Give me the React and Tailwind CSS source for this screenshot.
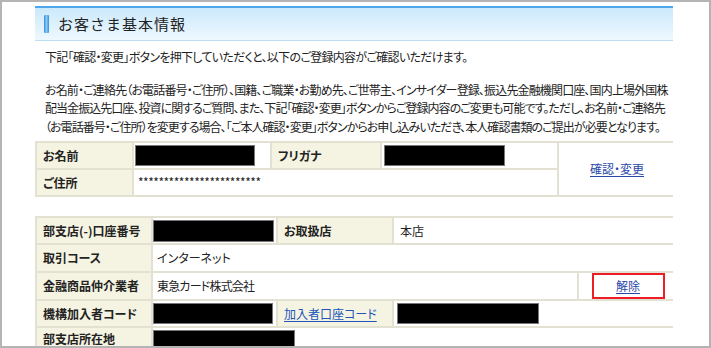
import React from "react";

const JP = "font-['Noto_Sans_CJK_JP','Noto_Sans',sans-serif]";

function Black({ w, h = "h-[21px]" }) {
  return <div className={`${w} ${h} bg-black border border-[#777]`} />;
}

function Label({ children, className = "" }) {
  return (
    <div className={`bg-[#f5f3e1] flex pl-[6px] font-bold text-[12px] text-[#222] ${className || "items-center"}`}>
      {children}
    </div>
  );
}

function Cell({ children, className = "" }) {
  return <div className={`bg-white flex items-center text-[12px] text-[#222] ${className}`}>{children}</div>;
}

export default function App() {
  return (
    <div className={`w-[711px] h-[348px] overflow-hidden bg-white border-2 border-[#b4b4b4] ${JP} [font-feature-settings:'palt']`}>
      <div className="pl-[33px] pt-[4px] w-[671px]">
        {/* header */}
        <div className="h-[35px] border-t-2 border-[#4fa6e8] border-b border-b-[#bcdff3] bg-gradient-to-b from-[#cbe9fb] to-[#eef8fe] flex items-center">
          <div className="ml-[9px] w-[5px] h-[18px] rounded-[1px] bg-gradient-to-r from-[#2f8fdc] via-[#8cc8f2] to-[#2f8fdc]" />
          <div className="ml-[9px] text-[15px] tracking-[1px] text-[#222] [font-feature-settings:normal]">お客さま基本情報</div>
        </div>

        {/* text */}
        <div className="pl-[10px] text-[12px] leading-[18.5px] tracking-[-0.7px] text-[#222] whitespace-nowrap">
          <p className="mt-[7px]">下記「確認・変更」ボタンを押下していただくと、以下のご登録内容がご確認いただけます。</p>
          <p className="mt-[14px]">
            <span className="block tracking-[-0.85px]">お名前・ご連絡先（お電話番号・ご住所）、国籍、ご職業・お勤め先、ご世帯主、インサイダー登録、振込先金融機関口座、国内上場外国株</span>
            <span className="block tracking-[-0.95px]">配当金振込先口座、投資に関するご質問、また、下記「確認・変更」ボタンからご登録内容のご変更も可能です。ただし、お名前・ご連絡先</span>
            <span className="block tracking-[-0.95px]">（お電話番号・ご住所）を変更する場合、「ご本人確認・変更」ボタンからお申し込みいただき、本人確認書類のご提出が必要となります。</span>
          </p>
        </div>

        {/* table 1 */}
        <div className="mt-[5px] w-[638px] bg-[#e2e1d2] p-[2px] grid grid-cols-[95px_136px_108px_175px_116px] grid-rows-[25px_25px] gap-[2px]">
          <Label>お名前</Label>
          <Cell className="pl-[1px]"><Black w="w-[120px]" /></Cell>
          <Label>フリガナ</Label>
          <Cell className="pl-[2px]"><Black w="w-[121px]" /></Cell>
          <Cell className="row-span-2 justify-center">
            <a className="text-[#2b47a8] underline underline-offset-2" href="#">確認・変更</a>
          </Cell>
          <Label>ご住所</Label>
          <Cell className="col-span-3 pl-[4px] items-start pt-[3px] text-[11px] tracking-[-0.5px]">************************</Cell>
        </div>

        {/* table 2 */}
        <div className="mt-[19px] w-[638px] bg-[#e2e1d2] p-[2px] grid grid-cols-[114px_123px_114px_183px_96px] grid-rows-[25px_26px_26px_25px_25px] gap-[2px]">
          <Label>部支店(-)口座番号</Label>
          <Cell><Black w="w-[121px]" h="h-[22px]" /></Cell>
          <Label>お取扱店</Label>
          <Cell className="col-span-2 pl-[6px]">本店</Cell>

          <Label>取引コース</Label>
          <Cell className="col-span-4 pl-[4px]">インターネット</Cell>

          <Label>金融商品仲介業者</Label>
          <Cell className="col-span-3 pl-[4px] tracking-[-0.8px]">東急カード株式会社</Cell>
          <Cell className="justify-center pl-[2px]">
            <div className="w-[73px] h-[26px] -my-[1px] border-2 border-[#ee1c25] flex items-center justify-center">
              <a className="text-[#2b47a8] underline underline-offset-2" href="#">解除</a>
            </div>
          </Cell>

          <Label>機構加入者コード</Label>
          <Cell><Black w="w-[120px]" h="h-[21px]" /></Cell>
          <Label className="items-center font-normal">
            <a className="text-[#2255bb] underline underline-offset-2" href="#">加入者口座コード</a>
          </Label>
          <Cell className="col-span-2 pl-[3px]"><Black w="w-[142px]" h="h-[21px]" /></Cell>

          <Label className="items-start pt-[2px]">部支店所在地</Label>
          <Cell className="col-span-4 items-start pt-[2px]"><Black w="w-[142px]" h="h-[30px]" /></Cell>
        </div>
      </div>
    </div>
  );
}
